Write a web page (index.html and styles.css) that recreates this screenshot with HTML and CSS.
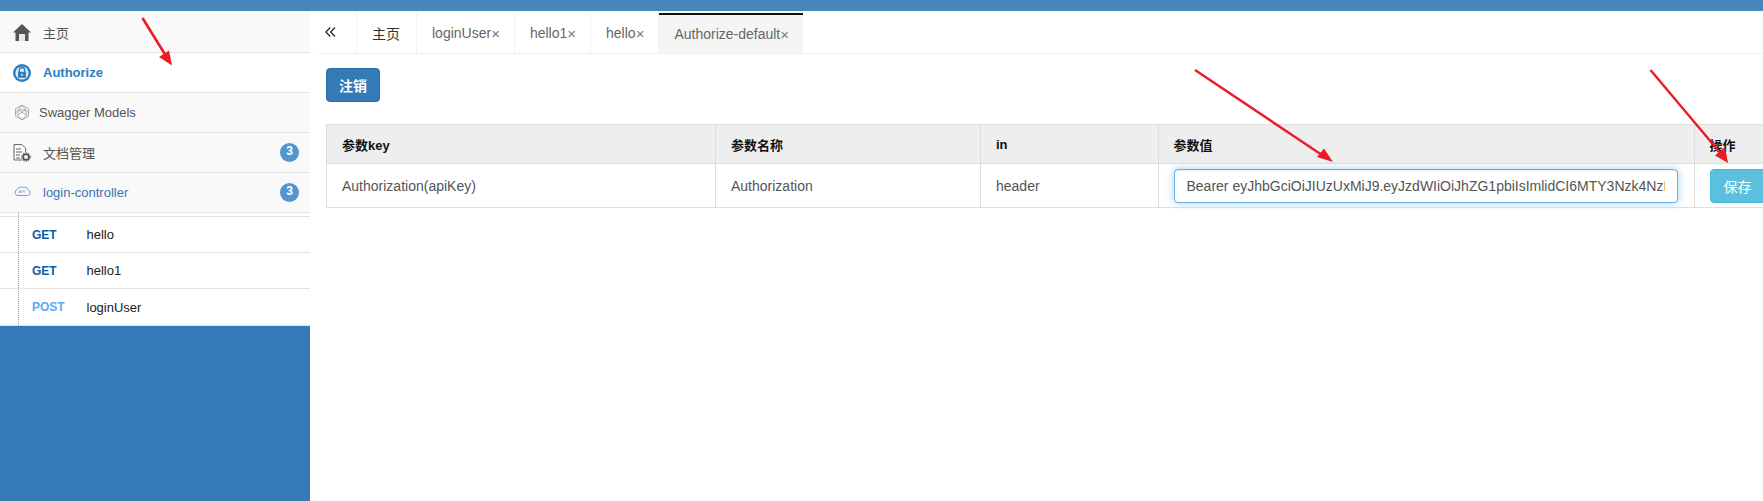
FILE: index.html
```html
<!DOCTYPE html>
<html lang="zh">
<head>
<meta charset="utf-8">
<title>Authorize</title>
<link rel="stylesheet" href="styles.css">
</head>
<body>
<div class="topbar"></div>
<div class="layout">
  <aside class="sidebar">
    <nav class="menu">
      <a class="item item-first">
        <svg class="ico" viewBox="0 0 18 18"><path d="M9 0 L18 8.5 L15.5 8.5 L15.5 17 L2.5 17 L2.5 8.5 L0 8.5 Z" fill="#555"/><rect x="6" y="10" width="6" height="7" fill="#e8e8e8"/></svg>
        <span>主页</span>
      </a>
      <a class="item item-active">
        <svg class="ico" viewBox="0 0 18 18"><circle cx="9" cy="9" r="9" fill="#2b7dc4"/><circle cx="9" cy="9" r="6.6" fill="#dbe9f5"/><path d="M6.3 8 V6.2 a2.7 2.7 0 0 1 5.4 0 V8" fill="none" stroke="#2b7dc4" stroke-width="1.3"/><rect x="5" y="7.8" width="8" height="6" rx=".6" fill="#2b7dc4"/><rect x="8.4" y="9.6" width="1.2" height="2.4" fill="#fff"/></svg>
        <span>Authorize</span>
      </a>
      <a class="item">
        <svg class="ico ico-cube" viewBox="0 0 18 18" fill="none" stroke-width="1"><path d="M9 .8 L16.2 4.8 V13.2 L9 17.2 L1.8 13.2 V4.8 Z" stroke="#a89a8a"/><path d="M9 .8 L5 6 L1.8 9.5 M9 .8 L13 6 L16.2 9.5 M5 6 H13 L14 12 L9 17.2 L4 12 Z M4 12 L13 6 M14 12 L5 6" stroke="#8d8d96" stroke-width=".7"/></svg>
        <span class="label-tight">Swagger Models</span>
      </a>
      <a class="item">
        <svg class="ico" viewBox="0 0 18 18" fill="none"><path d="M9 16 H1 V.6 H9 L12.6 4.2 V8" stroke="#666" stroke-width="1"/><path d="M3 5 H8 M3 8 H9 M3 11 H7 M3 14 H7" stroke="#666" stroke-width="1"/><circle cx="13" cy="13" r="2.9" stroke="#555" stroke-width="1.8"/><circle cx="13" cy="13" r="4.4" stroke="#555" stroke-width="1" stroke-dasharray="1.4 1.4"/></svg>
        <span>文档管理</span>
        <b class="badge">3</b>
      </a>
      <a class="item item-group">
        <svg class="ico ico-cloud" viewBox="0 0 18 10" fill="none"><path d="M4 9.5 H14.5 a3 3 0 0 0 .6 -5.8 a3.6 3.6 0 0 0 -5 -2.2 a4 4 0 0 0 -5.6 1.8 a3.2 3.2 0 0 0 0 6.2 Z" stroke="#6f8fc4" stroke-width=".9"/><text x="5.6" y="7.4" class="cloud-text">API</text></svg>
        <span>login-controller</span>
        <b class="badge">3</b>
      </a>
    </nav>
    <ul class="apis">
      <li class="api"><b class="get">GET</b><span>hello</span></li>
      <li class="api"><b class="get">GET</b><span>hello1</span></li>
      <li class="api api-last"><b class="post">POST</b><span>loginUser</span></li>
    </ul>
    <div class="side-fill"></div>
  </aside>
  <main class="main">
    <div class="tabs">
      <div class="collapse"><svg viewBox="0 0 11 10" fill="none" stroke="#222" stroke-width="1.2"><path d="M5.2 .5 L.9 5 L5.2 9.5 M10 .5 L5.7 5 L10 9.5"/></svg></div>
      <div class="tab tab-home">主页</div>
      <div class="tab">loginUser<i>×</i></div>
      <div class="tab">hello1<i>×</i></div>
      <div class="tab">hello<i>×</i></div>
      <div class="tab tab-active">Authorize-default<i>×</i></div>
    </div>
    <div class="content">
      <button class="btn btn-primary" type="button">注销</button>
      <table class="params">
        <colgroup>
          <col class="c1"><col class="c2"><col class="c3"><col class="c4"><col class="c5">
        </colgroup>
        <thead>
          <tr><th>参数key</th><th>参数名称</th><th>in</th><th>参数值</th><th>操作</th></tr>
        </thead>
        <tbody>
          <tr>
            <td>Authorization(apiKey)</td>
            <td>Authorization</td>
            <td>header</td>
            <td class="td-input"><input class="token" type="text" value="Bearer eyJhbGciOiJIUzUxMiJ9.eyJzdWIiOiJhZG1pbiIsImlidCI6MTY3Nzk4NzE2MywiZXhwIjoxNjc3OTk0MzYzfQ"></td>
            <td class="td-input"><button class="btn btn-info" type="button">保存</button></td>
          </tr>
        </tbody>
      </table>
    </div>
  </main>
</div>
<svg class="arrows" viewBox="0 0 1763 501">
  <g fill="#ed1c24" stroke="#ed1c24">
    <path d="M142.5 18 L166 56" stroke-width="2.6" fill="none"/>
    <path d="M172 65.5 L159 57 L169 50.5 Z" stroke="none"/>
    <path d="M1195 70 L1322 155" stroke-width="2.4" fill="none"/>
    <path d="M1333 162 L1317 157 L1324 148.5 Z" stroke="none"/>
    <path d="M1650.5 70 L1722 155" stroke-width="2.4" fill="none"/>
    <path d="M1728 163 L1715 155.5 L1725 147 Z" stroke="none"/>
  </g>
</svg>
</body>
</html>
```
FILE: styles.css
```css
* { box-sizing: border-box; }
html, body { margin: 0; height: 100%; }
body {
  position: relative;
  display: flex;
  flex-direction: column;
  height: 501px;
  overflow: hidden;
  background: #fff;
  font-family: "Liberation Sans", "Noto Sans CJK SC", sans-serif;
  font-size: 14px;
  color: #555;
}
.topbar { height: 11px; flex: none; background: #4886bc; }
.layout { flex: 1; display: flex; min-height: 0; }

/* sidebar */
.sidebar { width: 310px; flex: none; display: flex; flex-direction: column; background: #fff; }
.menu { display: flex; flex-direction: column; }
.item {
  height: 40px;
  display: flex;
  align-items: center;
  padding: 0 11px 0 13px;
  background: #f9f9f9;
  border-bottom: 1px solid #e4e4e4;
  font-size: 13px;
  color: #555;
}
.item-first { height: 42px; padding-top: 2px; }
.item-active { background: #fff; color: #2b7dc4; font-weight: bold; }
.item-group { color: #3a74b3; }
.ico { width: 18px; height: 18px; flex: none; margin-right: 12px; }
.ico-cube { margin: 0 9px 0 1px; width: 16px; height: 17px; }
.ico-cloud { height: 10px; margin-top: -3px; }
.cloud-text { font: italic 4px "Liberation Sans", sans-serif; fill: #6f8fc4; }
.label-tight { white-space: nowrap; }
.badge {
  margin-left: auto;
  width: 19px;
  height: 19px;
  border-radius: 50%;
  background: #5596cf;
  color: #fff;
  font-size: 12px;
  line-height: 17px;
  text-align: center;
}
.apis {
  list-style: none;
  margin: 0;
  padding: 3px 0 0;
  position: relative;
  background: #fff;
}
.apis::before {
  content: "";
  position: absolute;
  left: 18px;
  top: 0;
  bottom: 0;
  border-left: 1px dotted #7da7cf;
}
.api {
  height: 36px;
  display: flex;
  align-items: center;
  padding-left: 32px;
  border-bottom: 1px solid #e3e3e3;
  font-size: 13px;
  color: #222;
}
.apis .api:first-child { border-top: 1px solid #e3e3e3; height: 37px; }
.api-last { height: 37px; }
.api b { width: 54.5px; font-size: 12px; }
.get { color: #0f5ba6; }
.post { color: #5aa9f7; }
.side-fill { flex: 1; background: #337ab7; }

/* main */
.main { flex: 1; min-width: 0; overflow: hidden; padding-top: 2px; }
.tabs {
  height: 41px;
  margin-left: 8px;
  display: flex;
  border-bottom: 1px solid #eee;
}
.collapse {
  width: 39px;
  border-right: 1px solid #f2f2f2;
  padding: 14px 0 0 7px;
}
.collapse svg { display: block; width: 11px; height: 10px; }
.tab {
  display: flex;
  align-items: center;
  padding: 0 14px 0 15px;
  border-right: 1px solid #f2f2f2;
  color: #666;
  white-space: nowrap;
}
.tab i { font-style: normal; color: #777; font-size: 15px; }
.tab-home { color: #333; width: 60px; }
.tab-active {
  background: #f5f5f5;
  border-top: 2px solid #111;
  border-right: 0;
}
.content { padding: 14px 0 0 16px; }
.btn {
  display: block;
  height: 34px;
  border-radius: 4px;
  color: #fff;
  font: inherit;
  padding: 0 12px;
  border: 1px solid transparent;
}
.btn-primary { background: #337ab7; border-color: #2e6da4; font-weight: bold; width: 54px; }
.btn-info { background: #5bc0de; border-color: #46b8da; width: 56px; padding: 0 13px; }
.params {
  margin-top: 22px;
  border-collapse: collapse;
  table-layout: fixed;
  width: 1468px;
}
.c1 { width: 389px; }
.c2 { width: 265px; }
.c3 { width: 177.5px; }
.c4 { width: 536px; }
.c5 { width: 100.5px; }
.params th, .params td {
  border: 1px solid #ddd;
  padding: 0 15px;
  text-align: left;
  white-space: nowrap;
}
.params th { height: 39px; background: #eee; color: #111; font-size: 13px; font-weight: bold; }
.params td { height: 44px; color: #555; }
.params td.td-input { padding: 0 15px; }
.token {
  display: block;
  width: 504px;
  height: 34px;
  padding: 0 12px;
  border: 1px solid #66afe9;
  border-radius: 4px;
  outline: 0;
  box-shadow: inset 0 1px 1px rgba(0, 0, 0, .075), 0 0 8px rgba(102, 175, 233, .6);
  font: 14px "Liberation Sans", sans-serif;
  color: #555;
}

/* annotation arrows drawn on top of the screenshot */
.arrows {
  position: absolute;
  left: 0;
  top: 0;
  width: 1763px;
  height: 501px;
  pointer-events: none;
}
```
